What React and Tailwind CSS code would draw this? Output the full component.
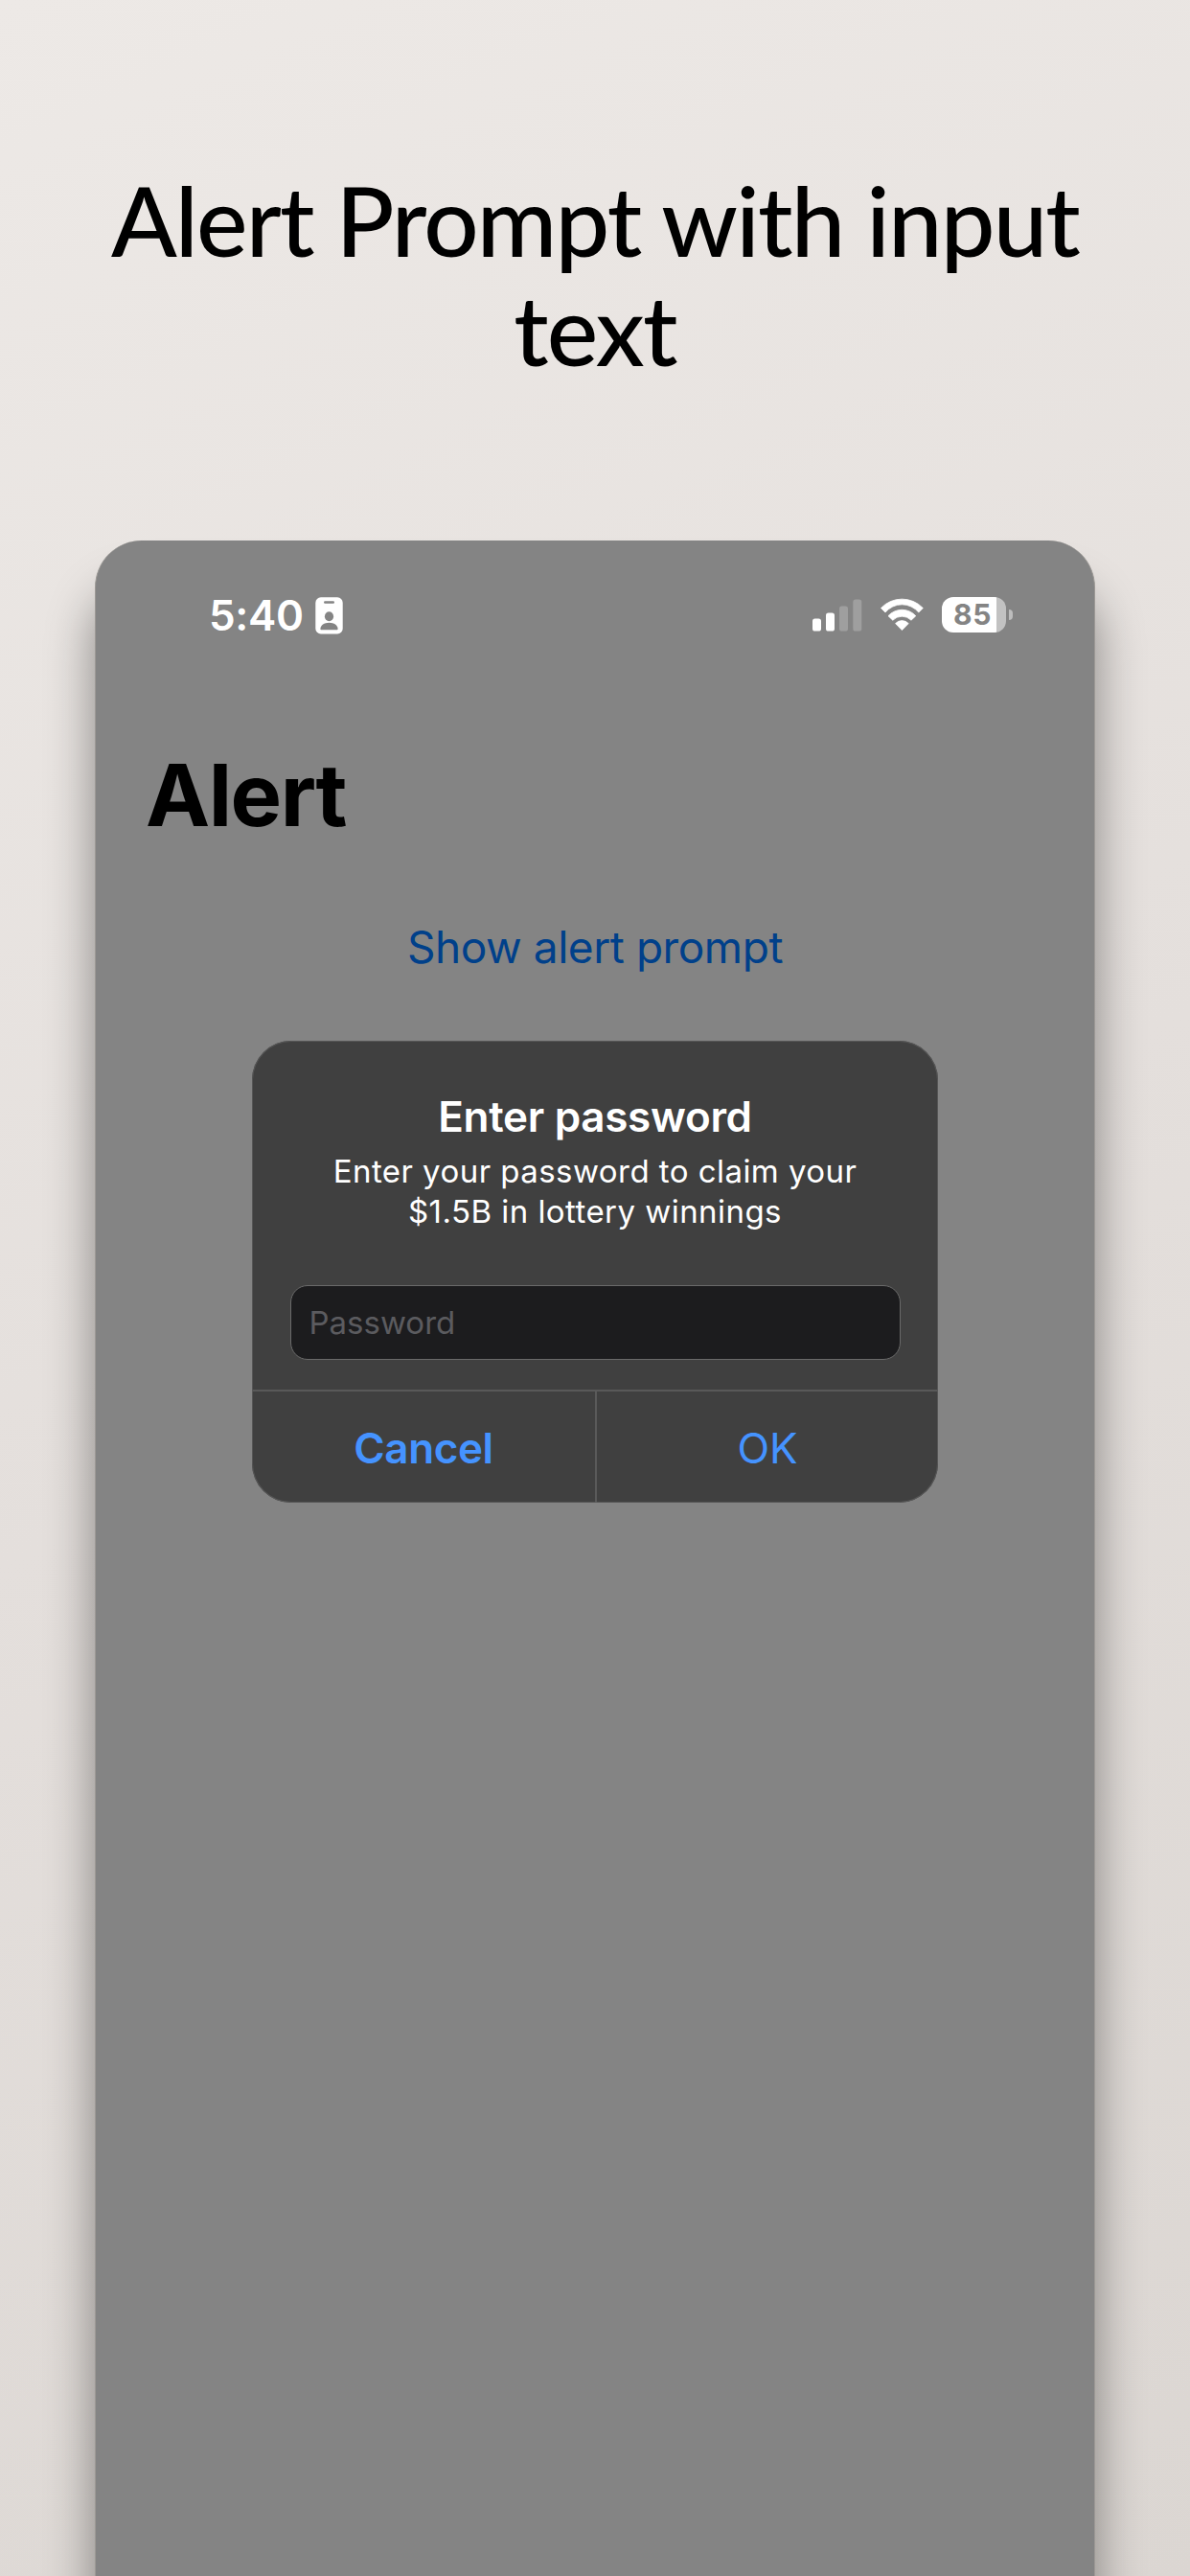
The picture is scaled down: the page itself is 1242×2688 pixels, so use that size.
function BadgeIcon() {
  return (
    <svg className="block h-[39px] w-[29px]" viewBox="0 0 29 39">
      <rect x="0.3" y="0.3" width="28.4" height="38.2" rx="5.6" fill="#fff" />
      <rect x="9" y="4.2" width="11" height="2.5" rx="1.25" fill="#848484" />
      <ellipse cx="14.5" cy="20.2" rx="4.6" ry="5" fill="#848484" />
      <path d="M5.4 33.2c0-3.6 4-6.4 9.1-6.4s9.1 2.8 9.1 6.4c0 .7-.4 1-1.1 1h-16c-.7 0-1.1-.3-1.1-1z" fill="#848484" />
    </svg>
  );
}

function SignalIcon() {
  return (
    <svg className="block h-[34px] w-[52px]" viewBox="0 0 52 34" fill="#fff">
      <rect x="0" y="20.5" width="9" height="13" rx="2.6" />
      <rect x="14" y="14.5" width="9" height="19" rx="2.6" />
      <rect x="28" y="7.5" width="9" height="26" rx="2.6" fill="#9f9f9f" />
      <rect x="42.3" y="0.5" width="9" height="33" rx="2.6" fill="#9f9f9f" />
    </svg>
  );
}

function WifiIcon() {
  return (
    <svg className="block h-[35px] w-[45px]" viewBox="0 0 45 35" fill="#fff" stroke="#fff" strokeWidth="0.8" strokeLinejoin="round">
      <path d="M.5 10.5A30.3 30.3 0 0 1 44.3 10.5L39.8 15A22.6 22.6 0 0 0 5 15z" />
      <path d="M8 18.7A19.4 19.4 0 0 1 36.8 18.7L32 23.2A13.4 13.4 0 0 0 12.8 23.2z" />
      <path d="M15.6 26.6A9.2 9.2 0 0 1 29.2 26.6L22.4 33.6z" />
    </svg>
  );
}

function Battery() {
  return (
    <div className="flex items-center gap-[3px]">
      <div className="flex h-[37px] w-[67px] items-center rounded-[12px] bg-[linear-gradient(to_right,#fff_57px,#c2c2c2_57px)] pb-[1px] pl-[12px] text-[30px] leading-none font-bold tracking-[0.8px] text-[#848484]">
        85
      </div>
      <div className="h-[11px] w-[4px] rounded-r-full bg-[#bdbdbd]" />
    </div>
  );
}

function StatusBar() {
  return (
    <div className="flex h-[98px] items-end justify-between pr-[85px] pl-[118px] text-white">
      <div className="flex items-end gap-[12px]">
        <span className="h-[42px] text-[44px] leading-[44px] font-semibold tracking-[-0.3px]">5:40</span>
        <BadgeIcon />
      </div>
      <div className="flex items-center gap-[19px] pb-[2px]">
        <SignalIcon />
        <WifiIcon />
        <Battery />
      </div>
    </div>
  );
}

function AlertDialog() {
  return (
    <div className="mx-auto mt-[75px] flex h-[482px] w-[716px] flex-col overflow-hidden rounded-[41px] bg-[#404040] text-center shadow-[inset_0_0_0_1px_#565656]">
      <h2 className="mt-[57px] text-[44px] leading-[44px] font-semibold tracking-[-0.3px] text-white">Enter password</h2>
      <p className="mt-[14px] text-[33px] leading-[42px] tracking-[0.45px] text-white">
        Enter your password to claim your
        <br />
        $1.5B in lottery winnings
      </p>
      <input
        type="password"
        placeholder="Password"
        className="mx-auto mt-[56px] block h-[78px] w-[637px] rounded-[18px] border border-[#6a6a6a] bg-[#1c1c1e] px-[19px] text-[33px] text-white placeholder:text-[#5b5b5f] placeholder:opacity-100"
      />
      <div className="mt-auto grid h-[118px] grid-cols-2 border-t-2 border-[#595959] text-[44px] leading-[44px] text-[#4593ff]">
        <button className="pt-[2px] font-semibold tracking-[-0.4px]">Cancel</button>
        <button className="border-l-2 border-[#5a5a5a] pt-[2px]">OK</button>
      </div>
    </div>
  );
}

export default function App() {
  return (
    <div className="h-[2688px] w-[1242px] overflow-hidden bg-[linear-gradient(155deg,#ede9e6_0%,#e4dfdc_50%,#dbd6d2_100%)] pt-[172px] font-['Inter',sans-serif]">
      <h1 className="h-[392px] text-center font-['Lato',sans-serif] text-[101px] leading-[114px] font-medium tracking-[-1.8px] text-black">
        Alert Prompt with input
        <br />
        text
      </h1>
      <main className="mx-auto h-[2200px] w-[1044px] rounded-t-[49px] border-x border-[#9c9995] bg-[#848484] shadow-[0_52px_50px_rgba(0,0,0,0.42)]">
        <StatusBar />
        <h2 className="mt-[123px] pl-[52px] text-[90px] leading-[90px] font-bold tracking-[-1.5px] text-black">Alert</h2>
        <button className="mx-auto mt-[90px] block text-[46px] leading-[46px] tracking-[-0.45px] text-[#00408a]">Show alert prompt</button>
        <AlertDialog />
      </main>
    </div>
  );
}
